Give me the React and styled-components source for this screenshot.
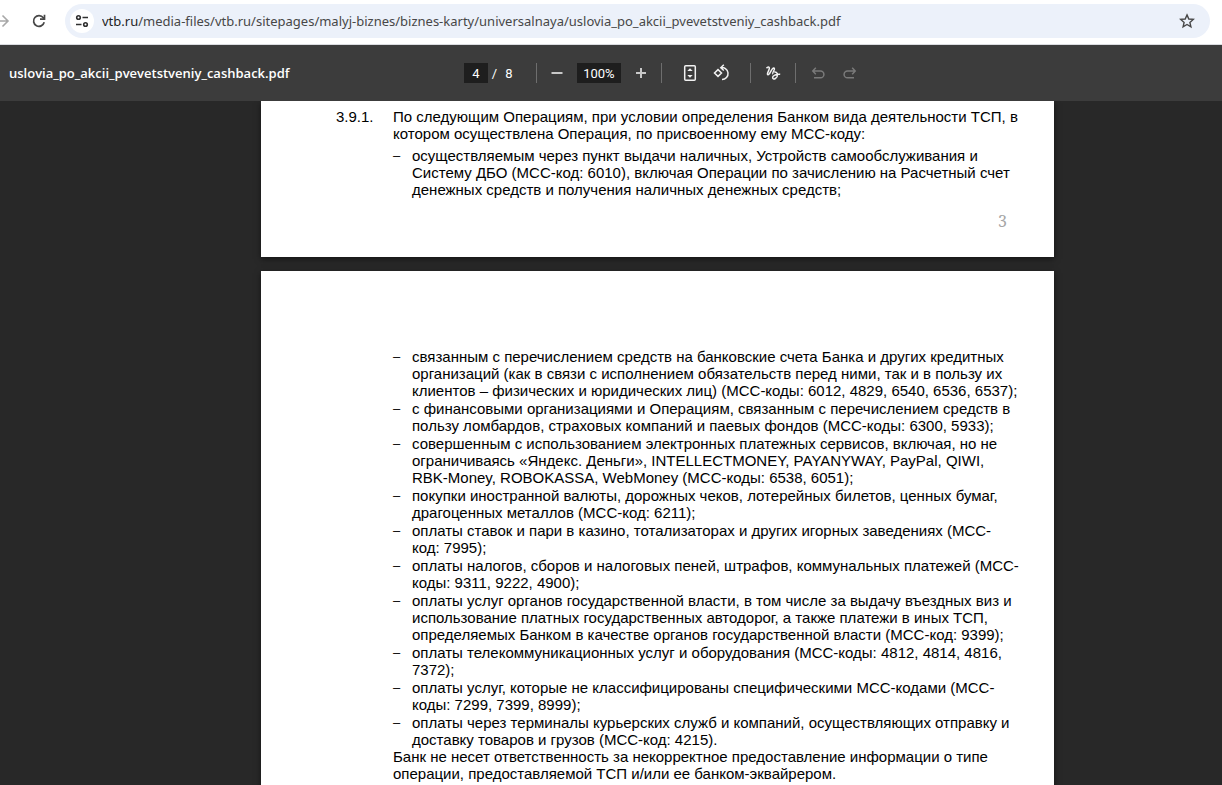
import styled, { createGlobalStyle } from "styled-components";

const GlobalStyle = createGlobalStyle`
  * {
    box-sizing: border-box;
  }

  body {
    margin: 0;
    background-color: #282828;
  }

  button {
    padding: 0;
    border: 0;
    background: none;
  }
`;

const operations = [
  "связанным с перечислением средств на банковские счета Банка и других кредитных организаций (как в связи с исполнением обязательств перед ними, так и в пользу их клиентов – физических и юридических лиц) (МСС-коды: 6012, 4829, 6540, 6536, 6537);",
  "с финансовыми организациями и Операциям, связанным с перечислением средств в пользу ломбардов, страховых компаний и паевых фондов (МСС-коды: 6300, 5933);",
  "совершенным с использованием электронных платежных сервисов, включая, но не ограничиваясь «Яндекс. Деньги», INTELLECTMONEY, PAYANYWAY, PayPal, QIWI, RBK-Money, ROBOKASSA, WebMoney (МСС-коды: 6538, 6051);",
  "покупки иностранной валюты, дорожных чеков, лотерейных билетов, ценных бумаг, драгоценных металлов (МСС-код: 6211);",
  "оплаты ставок и пари в казино, тотализаторах и других игорных заведениях (МСС-код:\u00a07995);",
  "оплаты налогов, сборов и налоговых пеней, штрафов, коммунальных платежей (МСС-коды: 9311, 9222, 4900);",
  "оплаты услуг органов государственной власти, в том числе за выдачу въездных виз и использование платных государственных автодорог, а также платежи в иных ТСП, определяемых Банком в качестве органов государственной власти (МСС-код: 9399);",
  "оплаты телекоммуникационных услуг и оборудования (МСС-коды: 4812, 4814, 4816, 7372);",
  "оплаты услуг, которые не классифицированы специфическими МСС-кодами (МСС-коды: 7299, 7399, 8999);",
  "оплаты через терминалы курьерских служб и компаний, осуществляющих отправку и доставку товаров и грузов (МСС-код: 4215).",
];

function App() {
  return (
    <Window>
      <GlobalStyle />
      <AddressBar />
      <Toolbar />
      <Viewer>
        <Sheet $first>
          <Clause>
            <ClauseNumber>3.9.1.</ClauseNumber>
            <Text>
              По следующим Операциям, при условии определения Банком вида деятельности ТСП, в
              котором осуществлена Операция, по присвоенному ему МСС-коду:
            </Text>
          </Clause>
          <List $spaced>
            <Item>
              осуществляемым через пункт выдачи наличных, Устройств самообслуживания и Систему ДБО
              (МСС-код: 6010), включая Операции по зачислению на Расчетный счет денежных средств и
              получения наличных денежных средств;
            </Item>
          </List>
          <PageNumber>3</PageNumber>
        </Sheet>
        <Sheet>
          <List>
            {operations.map((text) => (
              <Item key={text}>{text}</Item>
            ))}
          </List>
          <Note>
            Банк не несет ответственность за некорректное предоставление информации о типе
            операции, предоставляемой ТСП и/или ее банком-эквайрером.
          </Note>
        </Sheet>
      </Viewer>
    </Window>
  );
}

export default App;

function AddressBar() {
  return (
    <Bar>
      <NavButton aria-label="Вперед" $faded>
        <svg width="16" height="16" viewBox="0 0 16 16" fill="none" stroke="currentColor" strokeWidth="1.6">
          <path d="M1 8h13M8.5 2.5 14 8l-5.5 5.5" />
        </svg>
      </NavButton>
      <NavButton aria-label="Обновить">
        <svg width="16" height="16" viewBox="0 0 16 16" fill="none" stroke="currentColor" strokeWidth="1.7">
          <path d="M13.2 9.3A5.4 5.4 0 1 1 12.3 4.7L13.5 6" />
          <path d="M13.5 1.8V6.2H9" />
        </svg>
      </NavButton>
      <Omnibox>
        <SiteInfo aria-label="Сведения о сайте">
          <svg width="14" height="14" viewBox="0 0 14 14" fill="none" stroke="currentColor" strokeWidth="1.6">
            <circle cx="3.5" cy="3.5" r="1.8" />
            <path d="M7.5 3.5H13M1 10.5H6.5" />
            <circle cx="10.5" cy="10.5" r="1.8" />
          </svg>
        </SiteInfo>
        <Url href="#document">
          <Host>vtb.ru</Host>
          /media-files/vtb.ru/sitepages/malyj-biznes/biznes-karty/universalnaya/uslovia_po_akcii_pvevetstveniy_cashback.pdf
        </Url>
        <BookmarkButton aria-label="Добавить в закладки">
          <svg width="16" height="16" viewBox="0 0 16 16" fill="none" stroke="currentColor" strokeWidth="1.4">
            <path d="M8 1.9 9.8 6 14.3 6.4 10.9 9.4 11.9 13.8 8 11.5 4.1 13.8 5.1 9.4 1.7 6.4 6.2 6Z" />
          </svg>
        </BookmarkButton>
      </Omnibox>
    </Bar>
  );
}

function Toolbar() {
  return (
    <ToolbarWrapper>
      <Title>uslovia_po_akcii_pvevetstveniy_cashback.pdf</Title>
      <Controls>
        <PageInput aria-label="Номер страницы" defaultValue="4" />
        <PageCount>
          <span>/</span>
          <span>8</span>
        </PageCount>
        <Divider />
        <ToolGroup $pad={10} $gap={10}>
          <Tool aria-label="Уменьшить">
            <svg width="20" height="20" viewBox="0 0 20 20" stroke="#c8c8c8" strokeWidth="2">
              <path d="M4.5 10h11" />
            </svg>
          </Tool>
          <ZoomInput aria-label="Масштаб" defaultValue="100%" />
          <Tool aria-label="Увеличить">
            <svg width="20" height="20" viewBox="0 0 20 20" stroke="#c8c8c8" strokeWidth="2">
              <path d="M5 10h10M10 5v10" />
            </svg>
          </Tool>
        </ToolGroup>
        <Divider />
        <ToolGroup $pad={18} $gap={12}>
          <Tool aria-label="По размеру страницы">
            <svg width="20" height="20" viewBox="0 0 20 20" fill="none" stroke="currentColor">
              <rect x="4.7" y="2.7" width="10.6" height="14.6" rx="1" strokeWidth="1.5" />
              <path d="M7.3 8h5.4L10 5.3ZM7.3 12h5.4L10 14.7Z" fill="currentColor" stroke="none" />
            </svg>
          </Tool>
          <Tool aria-label="Повернуть">
            <svg width="20" height="20" viewBox="0 0 20 20" fill="none" stroke="currentColor" strokeWidth="1.5">
              <path d="M6 6.6 9.5 10 6 13.4 2.5 10Z" />
              <path d="M8.5 4.7A6 6 0 1 1 10 16.5M11.8 1.8 8.8 4.7 11.8 7.5" />
            </svg>
          </Tool>
        </ToolGroup>
        <Divider />
        <ToolGroup $pad={12} $gap={12}>
          <Tool aria-label="Рисовать">
            <svg width="20" height="20" viewBox="0 0 20 20" fill="none" stroke="currentColor" strokeWidth="1.5">
              <path d="M3.5 5.3C4.7 3.6 6.5 3.600 6.300 5.600 6 8 3.300 10.800 4.800 11.700 6.900 12.700 8.600 4.300 10.800 5 13 6 8.600 9.800 9.800 11.300" />
              <path d="M17.200 11.300C13 11 9.300 12.700 9.600 14.800 10.200 17.400 14.700 15.200 14.500 11.600 14.300 9.400 12.500 8.600 11.200 9" />
            </svg>
          </Tool>
        </ToolGroup>
        <Divider />
        <ToolGroup $pad={12} $gap={12}>
          <Tool aria-label="Отменить" disabled>
            <svg width="20" height="20" viewBox="0 0 20 20" fill="none" stroke="currentColor" strokeWidth="1.5">
              <path d="M7.8 4.8 4.8 8l3 3.2M5 8h7.5a3.4 3.4 0 0 1 0 6.8H6" />
            </svg>
          </Tool>
          <Tool aria-label="Повторить" disabled>
            <svg width="20" height="20" viewBox="0 0 20 20" fill="none" stroke="currentColor" strokeWidth="1.5">
              <path d="m12.2 4.8 3 3.2-3 3.2M15 8H7.5a3.4 3.4 0 0 0 0 6.8H14" />
            </svg>
          </Tool>
        </ToolGroup>
      </Controls>
      <Spacer />
    </ToolbarWrapper>
  );
}

const Window = styled.div`
  height: 100vh;
  display: flex;
  flex-direction: column;
  overflow: hidden;
`;

const Bar = styled.div`
  display: flex;
  align-items: center;
  padding: 4px 12px 6px 0;
  background-color: #ffffff;
  border-bottom: 1px solid #dadce0;
`;

const NavButton = styled.button`
  display: flex;
  align-items: center;
  margin-right: ${({ $faded }) => ($faded ? "21px" : "18px")};
  margin-left: ${({ $faded }) => ($faded ? "-6px" : "0")};
  color: ${({ $faded }) => ($faded ? "#a8a8a8" : "#474747")};
`;

const BookmarkButton = styled(NavButton)`
  margin-right: 15px;
`;

const Omnibox = styled.div`
  flex: 1;
  min-width: 0;
  display: flex;
  align-items: center;
  height: 34px;
  padding-left: 5px;
  border-radius: 17px;
  background-color: #ecf1fa;
`;

const SiteInfo = styled.button`
  flex: none;
  display: flex;
  align-items: center;
  justify-content: center;
  width: 24px;
  height: 24px;
  border-radius: 12px;
  background-color: #ffffff;
  color: #303030;
`;

const Url = styled.a`
  flex: 1;
  min-width: 0;
  margin-left: 8px;
  overflow: hidden;
  white-space: nowrap;
  text-decoration: none;
  font-family: "Noto Sans", sans-serif;
  font-size: 13px;
  line-height: 20px;
  color: #474747;
`;

const Host = styled.span`
  color: #1f1f1f;
`;

const ToolbarWrapper = styled.div`
  position: relative;
  z-index: 1;
  flex: none;
  display: flex;
  align-items: center;
  height: 56px;
  padding: 0 9px;
  background-color: #3c3c3c;
  font-family: Roboto, sans-serif;
  font-size: 13px;
  color: #ffffff;
`;

const Title = styled.div`
  flex: 4 1 0;
  font-family: "Open Sans", sans-serif;
  font-weight: 600;
`;

const Controls = styled.div`
  display: flex;
  align-items: center;
`;

const Spacer = styled.div`
  flex: 3 1 0;
`;

const PageInput = styled.input`
  width: 24px;
  height: 20px;
  padding: 0;
  border: 0;
  background-color: #1e1e1e;
  font: inherit;
  color: inherit;
  text-align: center;
`;

const ZoomInput = styled(PageInput)`
  width: 44px;
`;

const PageCount = styled.div`
  display: flex;
  gap: 8px;
  width: 48px;
  padding-left: 4px;
`;

const Divider = styled.div`
  width: 1px;
  height: 20px;
  background-color: #6e6e6e;
`;

const ToolGroup = styled.div`
  display: flex;
  align-items: center;
  gap: ${({ $gap }) => $gap}px;
  padding: 0 ${({ $pad }) => $pad}px;
`;

const Tool = styled.button`
  display: flex;
  color: #f1f1f1;

  &:disabled {
    color: #7a7a7a;
  }
`;

const Viewer = styled.main`
  flex: 1;
  min-height: 0;
  display: flex;
  flex-direction: column;
  align-items: center;
  gap: 14px;
  padding-left: 93px;
  overflow: hidden;
`;

const Sheet = styled.section`
  flex: none;
  width: 793px;
  padding: ${({ $first }) => ($first ? "7px 33px 27px 75px" : "77px 33px 80px 75px")};
  background-color: #ffffff;
  box-shadow: 0 2px 6px rgba(0, 0, 0, 0.5);
  font-family: "Liberation Sans", Arial, sans-serif;
  font-size: 15px;
  line-height: 17px;
  color: #000000;
`;

const Clause = styled.div`
  display: flex;
`;

const ClauseNumber = styled.span`
  width: 57px;
`;

const Text = styled.p`
  flex: 1;
  margin: 0;
`;

const Note = styled.p`
  margin: 0 0 0 57px;
`;

const List = styled.ul`
  display: flex;
  flex-direction: column;
  gap: 1px;
  margin: ${({ $spaced }) => ($spaced ? "5px 0 0 57px" : "0 0 0 57px")};
  padding: 0;
  list-style: none;
`;

const Item = styled.li`
  display: flex;

  &::before {
    content: "–";
    flex: none;
    width: 19px;
    font-size: 13px;
  }
`;

const PageNumber = styled.div`
  margin: 15px 14px 0 0;
  font-family: "Noto Serif", "Liberation Serif", serif;
  font-size: 16px;
  text-align: right;
  color: #a6a6a6;
`;
